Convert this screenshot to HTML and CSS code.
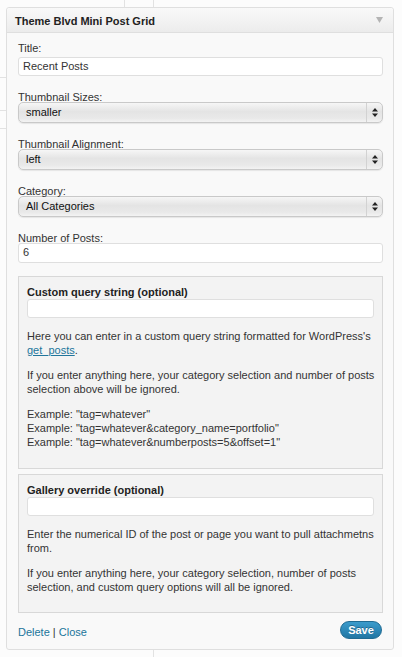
FILE: index.html
```html
<!DOCTYPE html>
<html>
<head>
<meta charset="utf-8">
<link rel="stylesheet" href="styles.css">
</head>
<body>
<div class="widget">
  <div class="widget-top">
    <h3 class="widget-title">Theme Blvd Mini Post Grid</h3>
    <svg class="toggle" width="7" height="6" viewBox="0 0 7 6"><path d="M0 0 L7 0 L3.5 6 Z" fill="#b4b4b4"/></svg>
  </div>
  <div class="widget-inside">
    <div class="field field-first">
      <label class="lbl">Title:</label>
      <div class="input">Recent Posts</div>
    </div>
    <div class="field">
      <label class="lbl lbl-tight">Thumbnail Sizes:</label>
      <div class="select"><span class="sel-text">smaller</span><span class="sel-arrow"><svg width="6" height="9" viewBox="0 0 6 9"><path d="M3 0 L6 3.5 L0 3.5 Z M0 5.5 L6 5.5 L3 9 Z" fill="#222"/></svg></span></div>
    </div>
    <div class="field">
      <label class="lbl lbl-tight">Thumbnail Alignment:</label>
      <div class="select"><span class="sel-text">left</span><span class="sel-arrow"><svg width="6" height="9" viewBox="0 0 6 9"><path d="M3 0 L6 3.5 L0 3.5 Z M0 5.5 L6 5.5 L3 9 Z" fill="#222"/></svg></span></div>
    </div>
    <div class="field">
      <label class="lbl lbl-tight">Category:</label>
      <div class="select"><span class="sel-text">All Categories</span><span class="sel-arrow"><svg width="6" height="9" viewBox="0 0 6 9"><path d="M3 0 L6 3.5 L0 3.5 Z M0 5.5 L6 5.5 L3 9 Z" fill="#222"/></svg></span></div>
    </div>
    <div class="field field-last">
      <label class="lbl lbl-tight">Number of Posts:</label>
      <div class="input">6</div>
    </div>
    <div class="box box-query">
      <h4 class="box-title">Custom query string (optional)</h4>
      <div class="input box-input"></div>
      <p class="desc">Here you can enter in a custom query string formatted for WordPress's <a href="#" class="link">get_posts</a>.</p>
      <p class="desc">If you enter anything here, your category selection and number of posts selection above will be ignored.</p>
      <p class="desc">Example: "tag=whatever"<br>Example: "tag=whatever&amp;category_name=portfolio"<br>Example: "tag=whatever&amp;numberposts=5&amp;offset=1"</p>
    </div>
    <div class="box box-gallery">
      <h4 class="box-title">Gallery override (optional)</h4>
      <div class="input box-input"></div>
      <p class="desc">Enter the numerical ID of the post or page you want to pull attachmetns from.</p>
      <p class="desc">If you enter anything here, your category selection, number of posts selection, and custom query options will all be ignored.</p>
    </div>
    <div class="controls">
      <div class="links"><a href="#" class="link">Delete</a> | <a href="#" class="link">Close</a></div>
      <button class="save">Save</button>
    </div>
  </div>
</div>
</body>
</html>
```
FILE: styles.css
```css
html, body {
  margin: 0;
  padding: 0;
}
body {
  width: 402px;
  height: 657px;
  overflow: hidden;
  font-family: "Liberation Sans", Arial, sans-serif;
  font-size: 11px;
  color: #333;
  background-color: #fcfcfc;
  background-image:
    linear-gradient(#e2e2e2, #e2e2e2),
    linear-gradient(#e2e2e2, #e2e2e2),
    linear-gradient(#e2e2e2, #e2e2e2),
    linear-gradient(#e2e2e2, #e2e2e2),
    linear-gradient(#e2e2e2, #e2e2e2),
    linear-gradient(#e2e2e2, #e2e2e2);
  background-repeat: no-repeat;
  background-size: 1px 8px, 1px 8px, 7px 1px, 7px 1px, 7px 1px, 1px 14px;
  background-position: 124px 0, 153px 0, 0 77px, 0 110px, 0 128px, 153px 648px;
  padding-top: 7px;
  box-sizing: border-box;
}
.widget {
  margin-left: 6px;
  width: 388px;
  box-sizing: border-box;
  border: 1px solid #dfdfdf;
  border-radius: 3px;
  background: #f9f9f9;
  box-shadow: 0 1px 0 #fff inset;
}
.widget-top {
  height: 25px;
  box-sizing: border-box;
  display: flex;
  align-items: center;
  justify-content: space-between;
  padding: 2px 10px 0 8px;
  background: linear-gradient(#f9f9f9, #ececec);
  border-bottom: 1px solid #dfdfdf;
  border-radius: 3px 3px 0 0;
}
.widget-title {
  margin: 0;
  font-size: 11px;
  line-height: 23px;
  font-weight: bold;
  color: #222;
}
.toggle {
  margin-top: -2px;
}
.widget-inside {
  padding: 9px 10px 10px 11px;
}
.field {
  margin-bottom: 15px;
}
.field-last {
  margin-bottom: 13px;
}
.lbl {
  display: block;
  line-height: 12px;
  margin-bottom: 3px;
}
.lbl-tight {
  margin-bottom: -1px;
}
.field-last .input {
  height: 20px;
}
.input {
  height: 19px;
  box-sizing: border-box;
  border: 1px solid #dfdfdf;
  border-radius: 3px;
  background: #fff;
  padding: 0 4px;
  line-height: 17px;
  color: #333;
}
.select {
  height: 21px;
  box-sizing: border-box;
  display: flex;
  border: 1px solid #c9c9c9;
  border-radius: 5px;
  background: linear-gradient(#f6f6f6, #e4e4e4 45%, #e9e9e9 80%, #f3f3f3);
  box-shadow: 0 1px 1px rgba(0,0,0,0.08);
}
.sel-text {
  flex: 1;
  padding-left: 7px;
  line-height: 19px;
  color: #111;
}
.sel-arrow {
  width: 15px;
  border-left: 1px solid #d2d2d2;
  display: flex;
  align-items: center;
  justify-content: center;
}
.box {
  border: 1px solid #d8d8d8;
  background: #f3f3f3;
  padding: 9px 2px 18px 8px;
}
.box-query {
  padding-bottom: 19px;
}
.box-input {
  margin-right: 6px;
}
.box-gallery {
  margin-top: 5px;
}
.box-title {
  margin: 0 0 1px 0;
  font-size: 11px;
  font-weight: bold;
  color: #222;
  line-height: 12px;
}
.desc {
  margin: 11px 0 0 0;
  line-height: 14px;
}
.link {
  color: #21759b;
}
.controls {
  display: flex;
  justify-content: space-between;
  align-items: flex-end;
  margin-top: 8px;
}
.links a {
  text-decoration: none;
}
.links {
  color: #333;
  line-height: 14px;
}
.save {
  font-family: "Liberation Sans", Arial, sans-serif;
  font-size: 11px;
  font-weight: bold;
  color: #fff;
  height: 18px;
  width: 42px;
  margin-right: 1px;
  padding: 0;
  border: 1px solid #1f6b93;
  border-radius: 9px;
  background: linear-gradient(#3a9bcc, #2176a3);
  text-shadow: 0 -1px 0 rgba(0,0,0,0.3);
}
```
